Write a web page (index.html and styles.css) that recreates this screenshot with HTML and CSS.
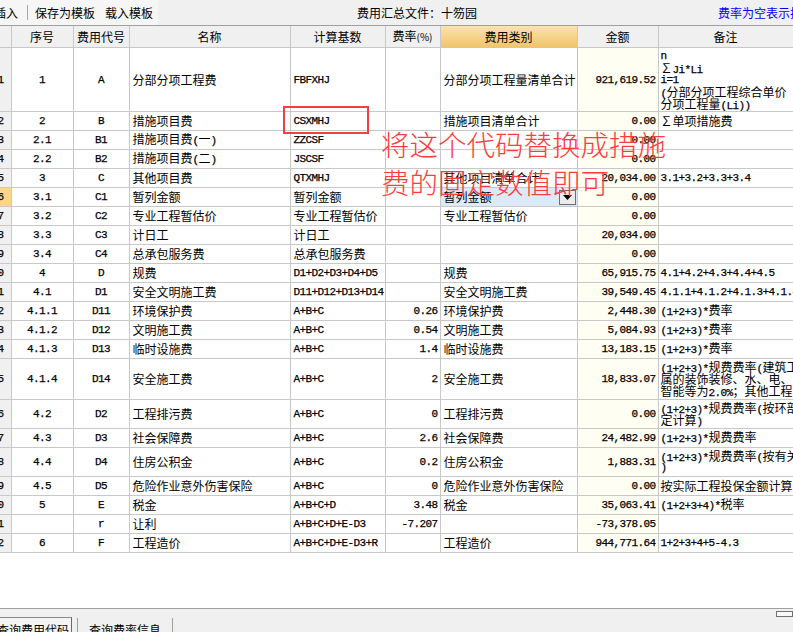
FILE: index.html
```html
<!DOCTYPE html>
<html lang="zh">
<head>
<meta charset="utf-8">
<title>费用汇总</title>
<link rel="stylesheet" href="styles.css">
</head>
<body>
<div class="toolbar">
  <div class="tb-left">
    <span class="cut">插入</span>
    <span class="sep"></span>
    <span>保存为模板</span>
    <span class="tb-gap">载入模板</span>
  </div>
  <span class="title">费用汇总文件：十笏园</span>
  <span class="hint">费率为空表示按实际计算</span>
</div>

<div class="grid">
  <table class="sheet">
    <colgroup>
      <col class="c-rn"><col class="c-no"><col class="c-code"><col class="c-name"><col class="c-base"><col class="c-rate"><col class="c-cat"><col class="c-amt"><col class="c-note">
    </colgroup>
    <thead>
      <tr class="hdr">
        <th class="rn"></th><th>序号</th><th>费用代号</th><th>名称</th><th>计算基数</th><th>费率<span class="pct">(%)</span></th><th class="active">费用类别</th><th>金额</th><th>备注</th>
      </tr>
    </thead>
    <tbody>
      <tr class="r64">
        <td class="rn"><div>1</div></td><td class="m c">1</td><td class="m c">A</td><td>分部分项工程费</td><td class="m">FBFXHJ</td><td class="m r"></td><td>分部分项工程量清单合计</td><td class="m r amt">921,619.52</td>
        <td class="note"><div class="ln m">n</div><div class="ln">∑<span class="m">Ji*Li</span></div><div class="ln m">i=1</div><div class="ln"><span class="m">(</span>分部分项工程综合单价</div><div class="ln">分项工程量<span class="m">(Li))</span></div></td>
      </tr>
      <tr><td class="rn"><div>2</div></td><td class="m c">2</td><td class="m c">B</td><td>措施项目费</td><td class="m">CSXMHJ</td><td class="m r"></td><td>措施项目清单合计</td><td class="m r amt">0.00</td><td class="note">∑单项措施费</td></tr>
      <tr><td class="rn"><div>3</div></td><td class="m c">2.1</td><td class="m c">B1</td><td>措施项目费<span class="m">(</span>一<span class="m">)</span></td><td class="m">ZZCSF</td><td class="m r"></td><td></td><td class="m r amt">0.00</td><td class="note"></td></tr>
      <tr><td class="rn"><div>4</div></td><td class="m c">2.2</td><td class="m c">B2</td><td>措施项目费<span class="m">(</span>二<span class="m">)</span></td><td class="m">JSCSF</td><td class="m r"></td><td></td><td class="m r amt">0.00</td><td class="note"></td></tr>
      <tr><td class="rn"><div>5</div></td><td class="m c">3</td><td class="m c">C</td><td>其他项目费</td><td class="m">QTXMHJ</td><td class="m r"></td><td>其他项目清单合计</td><td class="m r amt">20,034.00</td><td class="note m">3.1+3.2+3.3+3.4</td></tr>
      <tr><td class="rn sel"><div>6</div></td><td class="m c">3.1</td><td class="m c">C1</td><td>暂列金额</td><td>暂列金额</td><td class="m r"></td>
        <td class="combo-cell"><div class="combo"><span>暂列金额</span><span class="combo-btn"><svg width="9" height="5" viewBox="0 0 9 5"><path d="M0 0H9L4.5 5Z" fill="#000"/></svg></span></div></td>
        <td class="m r amt">0.00</td><td class="note"></td></tr>
      <tr><td class="rn"><div>7</div></td><td class="m c">3.2</td><td class="m c">C2</td><td>专业工程暂估价</td><td>专业工程暂估价</td><td class="m r"></td><td>专业工程暂估价</td><td class="m r amt">0.00</td><td class="note"></td></tr>
      <tr><td class="rn"><div>8</div></td><td class="m c">3.3</td><td class="m c">C3</td><td>计日工</td><td>计日工</td><td class="m r"></td><td></td><td class="m r amt">20,034.00</td><td class="note"></td></tr>
      <tr><td class="rn"><div>9</div></td><td class="m c">3.4</td><td class="m c">C4</td><td>总承包服务费</td><td>总承包服务费</td><td class="m r"></td><td></td><td class="m r amt">0.00</td><td class="note"></td></tr>
      <tr><td class="rn"><div>10</div></td><td class="m c">4</td><td class="m c">D</td><td>规费</td><td class="m">D1+D2+D3+D4+D5</td><td class="m r"></td><td>规费</td><td class="m r amt">65,915.75</td><td class="note m">4.1+4.2+4.3+4.4+4.5</td></tr>
      <tr><td class="rn"><div>11</div></td><td class="m c">4.1</td><td class="m c">D1</td><td>安全文明施工费</td><td class="m">D11+D12+D13+D14</td><td class="m r"></td><td>安全文明施工费</td><td class="m r amt">39,549.45</td><td class="note m">4.1.1+4.1.2+4.1.3+4.1.4</td></tr>
      <tr><td class="rn"><div>12</div></td><td class="m c">4.1.1</td><td class="m c">D11</td><td>环境保护费</td><td class="m">A+B+C</td><td class="m r">0.26</td><td>环境保护费</td><td class="m r amt">2,448.30</td><td class="note"><span class="m">(1+2+3)*</span>费率</td></tr>
      <tr><td class="rn"><div>13</div></td><td class="m c">4.1.2</td><td class="m c">D12</td><td>文明施工费</td><td class="m">A+B+C</td><td class="m r">0.54</td><td>文明施工费</td><td class="m r amt">5,084.93</td><td class="note"><span class="m">(1+2+3)*</span>费率</td></tr>
      <tr><td class="rn"><div>14</div></td><td class="m c">4.1.3</td><td class="m c">D13</td><td>临时设施费</td><td class="m">A+B+C</td><td class="m r">1.4</td><td>临时设施费</td><td class="m r amt">13,183.15</td><td class="note"><span class="m">(1+2+3)*</span>费率</td></tr>
      <tr class="r41"><td class="rn"><div>15</div></td><td class="m c">4.1.4</td><td class="m c">D14</td><td>安全施工费</td><td class="m">A+B+C</td><td class="m r">2</td><td>安全施工费</td><td class="m r amt">18,833.07</td>
        <td class="note"><div class="ln"><span class="m">(1+2+3)*</span>规费费率<span class="m">(</span>建筑工程</div><div class="ln">属的装饰装修、水、电、</div><div class="ln">智能等为<span class="m">2.0%</span>；其他工程</div></td></tr>
      <tr class="r29"><td class="rn"><div>16</div></td><td class="m c">4.2</td><td class="m c">D2</td><td>工程排污费</td><td class="m">A+B+C</td><td class="m r">0</td><td>工程排污费</td><td class="m r amt">0.00</td>
        <td class="note"><div class="ln"><span class="m">(1+2+3)*</span>规费费率<span class="m">(</span>按环部门规</div><div class="ln">定计算<span class="m">)</span></div></td></tr>
      <tr><td class="rn"><div>17</div></td><td class="m c">4.3</td><td class="m c">D3</td><td>社会保障费</td><td class="m">A+B+C</td><td class="m r">2.6</td><td>社会保障费</td><td class="m r amt">24,482.99</td><td class="note"><span class="m">(1+2+3)*</span>规费费率</td></tr>
      <tr class="r29"><td class="rn"><div>18</div></td><td class="m c">4.4</td><td class="m c">D4</td><td>住房公积金</td><td class="m">A+B+C</td><td class="m r">0.2</td><td>住房公积金</td><td class="m r amt">1,883.31</td>
        <td class="note"><div class="ln"><span class="m">(1+2+3)*</span>规费费率<span class="m">(</span>按有关规定</div><div class="ln m">)</div></td></tr>
      <tr><td class="rn"><div>19</div></td><td class="m c">4.5</td><td class="m c">D5</td><td>危险作业意外伤害保险</td><td class="m">A+B+C</td><td class="m r">0</td><td>危险作业意外伤害保险</td><td class="m r amt">0.00</td><td class="note">按实际工程投保金额计算</td></tr>
      <tr><td class="rn"><div>20</div></td><td class="m c">5</td><td class="m c">E</td><td>税金</td><td class="m">A+B+C+D</td><td class="m r">3.48</td><td>税金</td><td class="m r amt">35,063.41</td><td class="note"><span class="m">(1+2+3+4)*</span>税率</td></tr>
      <tr><td class="rn"><div>21</div></td><td class="m c"></td><td class="m c">r</td><td>让利</td><td class="m">A+B+C+D+E-D3</td><td class="m r">-7.207</td><td></td><td class="m r amt">-73,378.05</td><td class="note"></td></tr>
      <tr><td class="rn"><div>22</div></td><td class="m c">6</td><td class="m c">F</td><td>工程造价</td><td class="m">A+B+C+D+E-D3+R</td><td class="m r"></td><td>工程造价</td><td class="m r amt">944,771.64</td><td class="note m">1+2+3+4+5-4.3</td></tr>
    </tbody>
  </table>
</div>

<div class="bottom">
  <span class="tab tab-on">查询费用代码</span>
  <span class="tab">查询费率信息</span>
  <span class="scroll-btn"></span>
</div>

<div class="mark-box"></div>
<div class="mark-text">将这个代码替换成措施<br>费的固定数值即可</div>
</body>
</html>
```

FILE: styles.css
```css
html, body {
  margin: 0;
  padding: 0;
}
body {
  width: 793px;
  height: 632px;
  overflow: hidden;
  position: relative;
  background: #fff;
  color: #000;
  font-family: "Noto Sans CJK SC", sans-serif;
  font-size: 12px;
}

/* toolbar */
.toolbar {
  display: flex;
  align-items: center;
  height: 25px;
  background: #f0f0f0;
  white-space: nowrap;
  overflow: hidden;
}
.tb-left {
  display: flex;
  align-items: center;
  width: 158px;
  height: 25px;
  background: #f6f6f6;
  flex: none;
}
.cut { margin-left: -6px; }
.sep {
  width: 1px;
  height: 15px;
  background: #a8a8a8;
  margin: 0 7px 0 9px;
}
.tb-gap { margin-left: 10px; }
.title { margin-left: 199px; }
.hint { margin-left: 241px; color: #0000ff; }

/* grid */
.grid {
  height: 582px;
  border-top: 1px solid #a0a0a0;
  background: #fff;
  overflow: hidden;
}
.sheet {
  border-collapse: collapse;
  table-layout: fixed;
  width: 793px;
}
.c-rn { width: 11px; }
.c-no { width: 62px; }
.c-code { width: 56px; }
.c-name { width: 161px; }
.c-base { width: 95px; }
.c-rate { width: 55px; }
.c-cat { width: 137px; }
.c-amt { width: 81px; }
.c-note { width: 135px; }

.sheet th, .sheet td {
  border: 1px solid #c8c8c8;
  padding: 0 2px 0 3px;
  white-space: nowrap;
  overflow: hidden;
  vertical-align: middle;
  line-height: 14px;
}
.sheet th {
  font-weight: normal;
  background: #f0f0f0;
  height: 21px;
  text-align: center;
  padding: 0;
}
.sheet th.active {
  background: linear-gradient(#fbe2b0, #f1c468);
}
.sheet th:first-child, .sheet td:first-child { border-left: none; }
.sheet thead th { border-top: none; }
.pct { font-size: 10px; }

.sheet tbody tr { height: 19px; }
.sheet tbody tr.r64 { height: 64px; }
.sheet tbody tr.r41 { height: 41px; }
.sheet tbody tr.r29 { height: 29px; }

.sheet td.rn {
  background: #f0f0f0;
  padding: 0;
}
.sheet td.rn div {
  display: flex;
  justify-content: flex-end;
  overflow: hidden;
  padding-right: 7px;
  font-family: "Liberation Mono", monospace;
  font-size: 11px;
  letter-spacing: -0.6px;
  -webkit-text-stroke: 0.25px #000;
}
.sheet td.rn.sel { background: #fdd48a; }

.m {
  font-family: "Liberation Mono", monospace;
  font-size: 11px;
  letter-spacing: -0.6px;
  -webkit-text-stroke: 0.25px #000;
}
.sheet td.c { text-align: center; padding: 0; }
.sheet td.r { text-align: right; padding: 0 2px 0 0; }
.sheet td.amt { background: #fffef2; }
.sheet td.note {
  padding: 0 0 0 2px;
}
.ln {
  height: 12px;
  line-height: 12px;
  white-space: nowrap;
}

.sheet td.combo-cell { padding: 0; }
.combo {
  display: flex;
  align-items: center;
  justify-content: space-between;
  height: 18px;
  background: #dce9f9;
  padding-left: 3px;
}
.combo-btn {
  display: flex;
  align-items: center;
  justify-content: center;
  width: 15px;
  height: 13px;
  margin-right: 1px;
  background: #ececec;
  border: 1px solid #6e6e6e;
}

/* bottom tabs */
.bottom {
  position: relative;
  display: flex;
  align-items: flex-start;
  height: 23px;
  border-top: 1px solid #a0a0a0;
  background: #f0f0f0;
  white-space: nowrap;
  overflow: hidden;
}
.tab {
  margin-top: 9px;
  padding: 4px 11px 0 11px;
  border-right: 1px solid #a0a0a0;
  height: 20px;
  line-height: 15px;
}
.tab-on {
  margin-top: 8px;
  margin-left: -3px;
  padding: 4px 2px 0 0;
  border-top: 1px solid #8a8a8a;
  border-right: 1px solid #6a6a6a;
  margin-right: 5px;
  background: #f4f4f4;
}
.tab-on + .tab { border-left: 1px solid #a0a0a0; }
.scroll-btn {
  margin: 2px 0 0 auto;
  width: 15px;
  height: 4px;
  border: 1px solid #707070;
  background: #f8f8f8;
}

/* annotation overlay */
.mark-box {
  position: absolute;
  left: 283px;
  top: 106px;
  width: 86px;
  height: 28px;
  box-sizing: border-box;
  border: 2px solid #f04040;
}
.mark-text {
  position: absolute;
  left: 381px;
  top: 125px;
  font-family: "Noto Sans CJK SC Light", "Noto Sans CJK SC DemiLight", "Noto Sans CJK SC", sans-serif;
  font-size: 28.5px;
  line-height: 38px;
  font-weight: 200;
  color: #ff3c3c;
  white-space: nowrap;
}
```
